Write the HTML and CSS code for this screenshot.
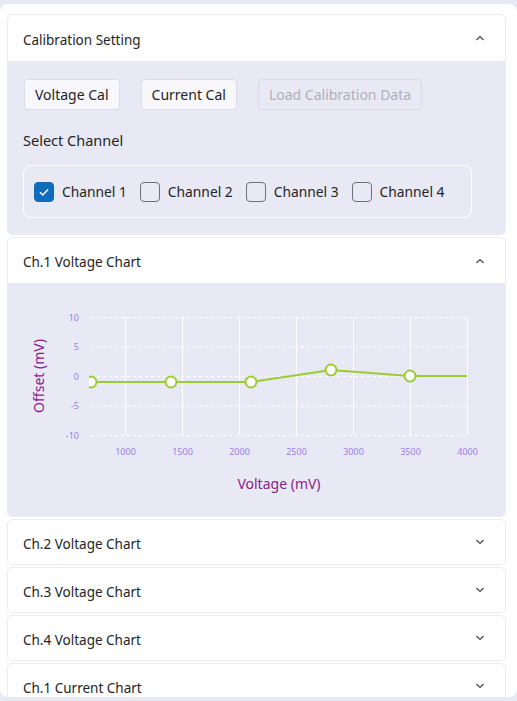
FILE: index.html
```html
<!DOCTYPE html>
<html>
<head>
<meta charset="utf-8">
<link rel="stylesheet" href="styles.css">
</head>
<body>
<div class="wrap">
  <div class="card">
    <div class="head open"><span>Calibration Setting</span><svg class="chev" width="10" height="6" viewBox="0 0 10 6"><path d="M1.5 5 L5 1.5 L8.5 5" fill="none" stroke="#444" stroke-width="1.2"/></svg></div>
    <div class="body cal">
      <div class="btns">
        <button class="btn">Voltage Cal</button>
        <button class="btn">Current Cal</button>
        <button class="btn dis" disabled>Load Calibration Data</button>
      </div>
      <div class="sel">Select Channel</div>
      <div class="chbox">
        <label class="ch"><span class="cb on"><svg width="12" height="10" viewBox="0 0 12 10"><path d="M2 5.2 L4.8 8 L10 2.5" fill="none" stroke="#fff" stroke-width="1.4"/></svg></span>Channel 1</label>
        <label class="ch"><span class="cb"></span>Channel 2</label>
        <label class="ch"><span class="cb"></span>Channel 3</label>
        <label class="ch"><span class="cb"></span>Channel 4</label>
      </div>
    </div>
  </div>
  <div class="card">
    <div class="head open2"><span>Ch.1 Voltage Chart</span><svg class="chev" width="10" height="6" viewBox="0 0 10 6"><path d="M1.5 5 L5 1.5 L8.5 5" fill="none" stroke="#444" stroke-width="1.2"/></svg></div>
    <div class="body chart">
      <svg width="499" height="233" viewBox="0 0 499 233">
        <defs><clipPath id="plot"><rect x="81" y="20" width="390" height="150"/></clipPath></defs>
        <g stroke="#fff" stroke-width="1">
          <line x1="117.5" y1="34" x2="117.5" y2="152"/>
          <line x1="174.5" y1="34" x2="174.5" y2="152"/>
          <line x1="231.5" y1="34" x2="231.5" y2="152"/>
          <line x1="288.5" y1="34" x2="288.5" y2="152"/>
          <line x1="345.5" y1="34" x2="345.5" y2="152"/>
          <line x1="402.5" y1="34" x2="402.5" y2="152"/>
          <line x1="459.5" y1="34" x2="459.5" y2="152"/>
        </g>
        <g stroke="#fff" stroke-width="1" stroke-dasharray="3 3">
          <line x1="83" y1="34.5" x2="459" y2="34.5"/>
          <line x1="83" y1="64" x2="459" y2="64"/>
          <line x1="83" y1="93.5" x2="459" y2="93.5"/>
          <line x1="83" y1="123" x2="459" y2="123"/>
          <line x1="83" y1="152.5" x2="459" y2="152.5"/>
        </g>
        <g class="tick" text-anchor="end">
          <text x="71" y="37.5">10</text>
          <text x="71" y="67">5</text>
          <text x="71" y="96.5">0</text>
          <text x="71" y="126">-5</text>
          <text x="71" y="155.5">-10</text>
        </g>
        <g class="tick" text-anchor="middle">
          <text x="117.5" y="172">1000</text>
          <text x="174.5" y="172">1500</text>
          <text x="231.5" y="172">2000</text>
          <text x="288.5" y="172">2500</text>
          <text x="345.5" y="172">3000</text>
          <text x="402.5" y="172">3500</text>
          <text x="459.5" y="172">4000</text>
        </g>
        <g clip-path="url(#plot)">
          <polyline points="83,99 163,99 243,99 323,87 402,93 459,93" fill="none" stroke="#9acd32" stroke-width="2"/>
          <g fill="#fff" stroke="#9acd32" stroke-width="2">
            <circle cx="83" cy="99" r="5.5"/>
            <circle cx="163" cy="99" r="5.5"/>
            <circle cx="243" cy="99" r="5.5"/>
            <circle cx="323" cy="87" r="5.5"/>
            <circle cx="402" cy="93" r="5.5"/>
          </g>
        </g>
        <text class="ttl" x="0" y="0" transform="translate(36 93) rotate(-90)" text-anchor="middle">Offset (mV)</text>
        <text class="ttl" x="271" y="206" text-anchor="middle">Voltage (mV)</text>
      </svg>
    </div>
  </div>
  <div class="card"><div class="head"><span>Ch.2 Voltage Chart</span><svg class="chev" width="10" height="6" viewBox="0 0 10 6"><path d="M1.5 1 L5 4.5 L8.5 1" fill="none" stroke="#444" stroke-width="1.2"/></svg></div></div>
  <div class="card"><div class="head"><span>Ch.3 Voltage Chart</span><svg class="chev" width="10" height="6" viewBox="0 0 10 6"><path d="M1.5 1 L5 4.5 L8.5 1" fill="none" stroke="#444" stroke-width="1.2"/></svg></div></div>
  <div class="card"><div class="head"><span>Ch.4 Voltage Chart</span><svg class="chev" width="10" height="6" viewBox="0 0 10 6"><path d="M1.5 1 L5 4.5 L8.5 1" fill="none" stroke="#444" stroke-width="1.2"/></svg></div></div>
  <div class="card"><div class="head"><span>Ch.1 Current Chart</span><svg class="chev" width="10" height="6" viewBox="0 0 10 6"><path d="M1.5 1 L5 4.5 L8.5 1" fill="none" stroke="#444" stroke-width="1.2"/></svg></div></div>
</div>
</body>
</html>
```
FILE: styles.css
```css
html, body {
  margin: 0;
  padding: 0;
  background: #e8e9f5;
  height: 701px;
  overflow: hidden;
}
body {
  font-family: "Noto Sans", "Open Sans", sans-serif;
  color: #242424;
  padding-top: 4px;
  box-sizing: border-box;
}
.wrap {
  box-sizing: border-box;
  background: #fff;
  border-radius: 8px;
  height: 693px;
  overflow: hidden;
  padding: 10px 11px 0 7px;
  display: flex;
  flex-direction: column;
  gap: 2px;
}
.card {
  border: 1px solid #ececf0;
  border-radius: 5px;
  overflow: hidden;
  flex-shrink: 0;
  background: #fff;
}
.head {
  height: 41px;
  display: flex;
  align-items: center;
  justify-content: space-between;
  padding: 3px 20px 0 15px;
  font-size: 13.5px;
}
.head.open { height: 43px; }
.head.open2 { height: 42px; }
.chev { display: block; margin-top: -3px; }
.body { background: #e8e9f5; }
.cal { padding: 18px 16px 16px 16px; }
.btns { display: flex; gap: 21px; }
.btn {
  font-family: inherit;
  font-size: 14px;
  color: #242424;
  background: #f7f7fc;
  border: 1px solid #dcdce6;
  border-radius: 4px;
  height: 31px;
  padding: 0 10px;
}
.btn.dis {
  background: #e8e9f5;
  color: #b0b0b8;
  border-color: #d8d9e6;
}
.sel {
  font-size: 14.5px;
  margin: 20px 0 0 -1px;
  line-height: 20px;
}
.chbox {
  margin: 15px 0 0 -1px;
  width: 449px;
  height: 53px;
  box-sizing: border-box;
  border: 1px solid #fff;
  border-radius: 8px;
  display: flex;
  align-items: center;
  padding-left: 10px;
  gap: 13px;
}
.ch {
  display: flex;
  align-items: center;
  gap: 8px;
  font-size: 13.8px;
}
.cb {
  width: 18px;
  height: 18px;
  border: 1px solid #6e6e78;
  border-radius: 4px;
  display: flex;
  align-items: center;
  justify-content: center;
}
.cb.on {
  background: #0f6cbd;
  border-color: #0f6cbd;
}
.chart { height: 233px; }
.chart svg { display: block; }
.tick {
  font-family: "Noto Sans", sans-serif;
  font-size: 9px;
  fill: #9a7fe6;
}
.ttl {
  font-family: "Noto Sans", sans-serif;
  font-size: 14px;
  fill: #8b1a8b;
}
```
